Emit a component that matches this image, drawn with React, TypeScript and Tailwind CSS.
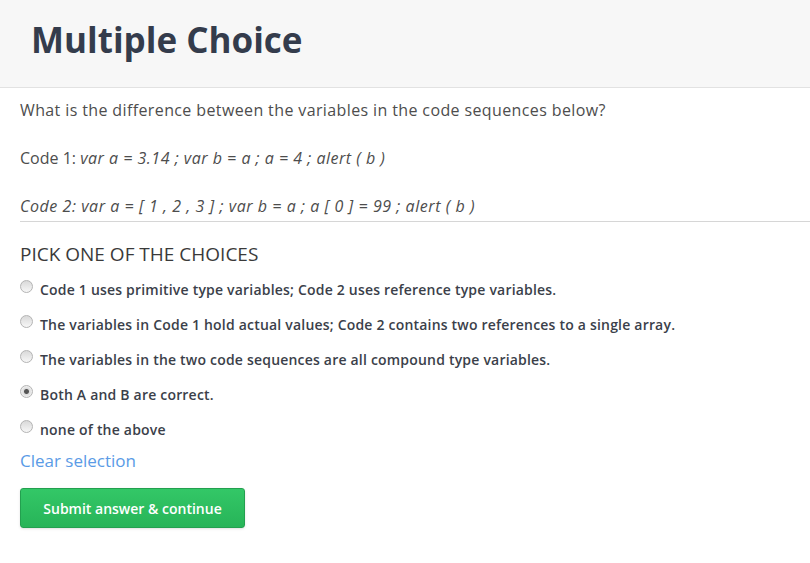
import { useState } from "react";

const choices = [
  "Code 1 uses primitive type variables; Code 2 uses reference type variables.",
  "The variables in Code 1 hold actual values; Code 2 contains two references to a single array.",
  "The variables in the two code sequences are all compound type variables.",
  "Both A and B are correct.",
  "none of the above",
];

export default function App() {
  const [picked, setPicked] = useState<number | null>(3);

  return (
    <div className="min-h-[563px] bg-white font-['Open_Sans',sans-serif] text-[#3a3f4a]">
      <header className="h-[88px] bg-[#f7f7f7] border-b border-[#e2e2e2] pl-[31px] pt-[17px]">
        <h1 className="text-[35px] leading-[46px] font-bold text-[#343c4c]">Multiple Choice</h1>
      </header>

      <div className="pl-5">
        <p className="mt-[11px] text-[16px] leading-[22px] tracking-[0.38px] text-[#4d4d4d]">
          What is the difference between the variables in the code sequences below?
        </p>
        <p className="mt-[26px] text-[16px] leading-[22px] text-[#4d4d4d]">
          Code 1: <i className="tracking-[0.5px]">var a = 3.14 ; var b = a ; a = 4 ; alert ( b )</i>
        </p>
        <p className="mt-[26px] pb-[4px] border-b border-[#d6d6d6] text-[16px] leading-[22px] text-[#4d4d4d]">
          <i className="tracking-[0.55px]">Code 2: var a = [ 1 , 2 , 3 ] ; var b = a ; a [ 0 ] = 99 ; alert ( b )</i>
        </p>

        <h2 className="mt-[20px] text-[19px] leading-[24px] text-[#3a3a3a]">PICK ONE OF THE CHOICES</h2>

        <ul className="mt-[12px] flex flex-col gap-[13px]">
          {choices.map((c, i) => (
            <li key={c}>
              <label className="flex items-center gap-[7px] cursor-pointer h-[22px]">
                <input
                  type="radio"
                  name="choice"
                  checked={picked === i}
                  onChange={() => setPicked(i)}
                  className="appearance-none w-[13px] h-[13px] m-0 -mt-[5px] rounded-full border border-[#b4b4b4] bg-gradient-to-b from-[#d9d9d9] to-[#f7f7f7] checked:bg-[radial-gradient(circle,#555_0,#555_2px,#dcdcdc_3px,#f4f4f4_6px)] shrink-0"
                />
                <span className="text-[14px] font-semibold tracking-[0.2px] text-[#3b3f4a]">{c}</span>
              </label>
            </li>
          ))}
        </ul>

        <button
          onClick={() => setPicked(null)}
          className="mt-[10px] block text-[17px] leading-[22px] text-[#5a9be6]"
        >
          Clear selection
        </button>

        <button className="mt-[16px] w-[225px] h-[40px] rounded-[3px] border border-[#23a04f] bg-gradient-to-b from-[#33c767] to-[#27b458] text-white text-[14px] font-semibold shadow-sm">
          Submit answer &amp; continue
        </button>
      </div>
    </div>
  );
}
